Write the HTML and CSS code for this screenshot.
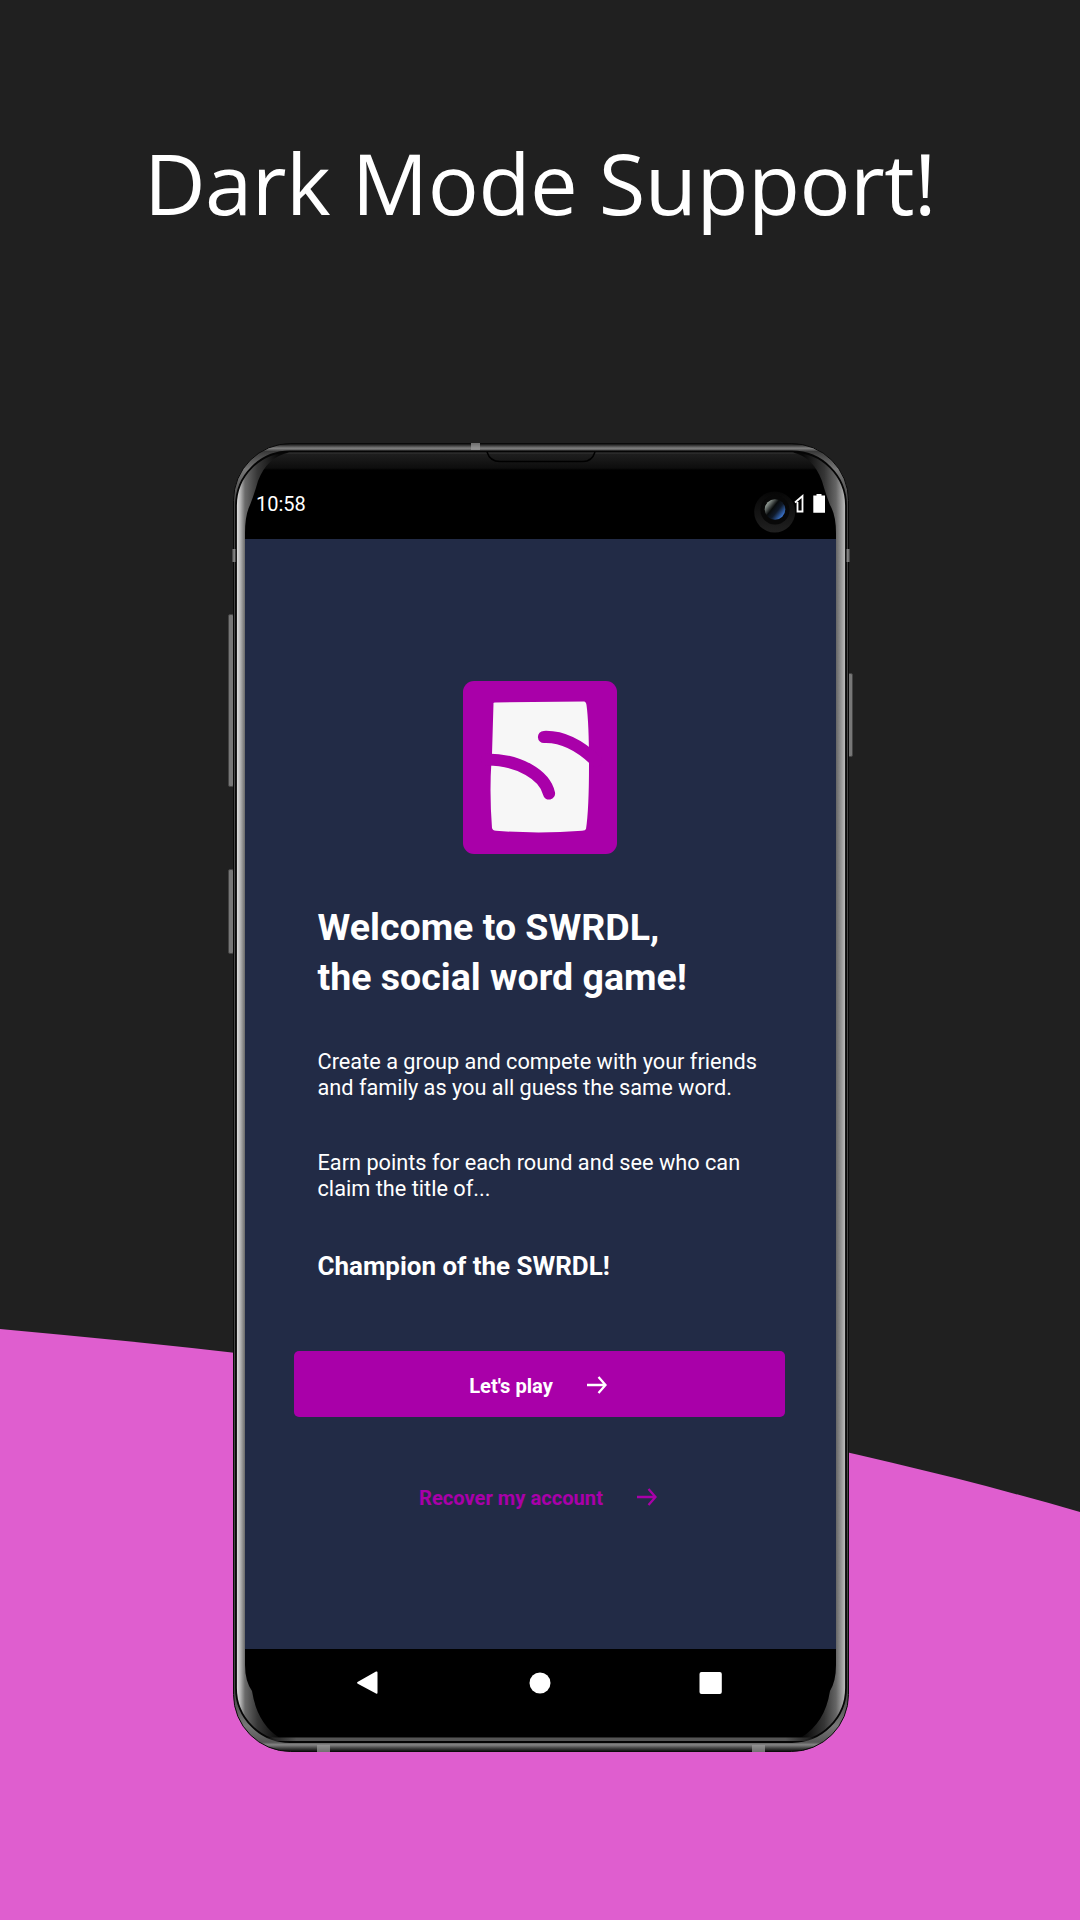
FILE: index.html
```html
<!DOCTYPE html>
<html lang="en">
<head>
<meta charset="utf-8">
<title>SWRDL</title>
<link rel="stylesheet" href="styles.css">
</head>
<body>
<main class="poster">
  <svg class="wave" viewBox="0 0 1080 1920" aria-hidden="true"><path d="M0 1329C360 1361.700 720 1408 1080 1512V1920H0Z"/></svg>
  <h1 class="headline">Dark Mode Support!</h1>
  <section class="phone">
    <i class="key volume"></i><i class="key assist"></i><i class="key power"></i>
    <svg class="shell" viewBox="0 0 616 1309" aria-hidden="true">
      <defs>
        <linearGradient id="rim" gradientUnits="userSpaceOnUse" x1="0" x2="0" y1="0" y2="1309">
          <stop offset="0" stop-color="#000"/><stop offset=".001" stop-color="#1a1a1a"/><stop offset=".004" stop-color="#808080"/><stop offset=".0065" stop-color="#3a3a3a"/><stop offset=".02" stop-color="#777"/><stop offset=".045" stop-color="#444"/><stop offset=".5" stop-color="#4a4a4a"/><stop offset=".955" stop-color="#444"/><stop offset=".98" stop-color="#777"/><stop offset=".9925" stop-color="#555"/><stop offset=".9945" stop-color="#858585"/><stop offset=".997" stop-color="#444"/><stop offset="1" stop-color="#000"/>
        </linearGradient>
        <linearGradient id="side" gradientUnits="userSpaceOnUse" x1="0" x2="616" y1="0" y2="0">
          <stop offset=".0065" stop-color="#ddd"/><stop offset=".012" stop-color="#b4b4b4"/><stop offset=".0195" stop-color="#6a6a6a"/><stop offset=".04" stop-color="#363636"/><stop offset=".075" stop-color="#080808"/>
          <stop offset=".925" stop-color="#080808"/><stop offset=".96" stop-color="#363636"/><stop offset=".979" stop-color="#666"/><stop offset=".988" stop-color="#999"/><stop offset=".9935" stop-color="#bbb"/>
        </linearGradient>
        <linearGradient id="glass" gradientUnits="userSpaceOnUse" x1="0" x2="0" y1="9" y2="27"><stop offset="0" stop-color="#444"/><stop offset=".12" stop-color="#1e1e1e"/><stop offset=".9" stop-color="#0d0d0d"/><stop offset="1" stop-color="#000"/></linearGradient>
        <linearGradient id="lip" gradientUnits="userSpaceOnUse" x1="30" x2="586" y1="0" y2="0"><stop offset="0" stop-color="#555" stop-opacity="0"/><stop offset=".06" stop-color="#555"/><stop offset=".94" stop-color="#555"/><stop offset="1" stop-color="#555" stop-opacity="0"/></linearGradient>
        <linearGradient id="lens" x1="0" y1=".1" x2="1" y2=".9"><stop offset=".1" stop-color="#a0aaa4"/><stop offset=".4" stop-color="#080b0c"/><stop offset=".6" stop-color="#101a2a"/><stop offset=".88" stop-color="#3973cc"/></linearGradient>
        <linearGradient id="ring" x1="0" x2="0" y1="0" y2="1"><stop offset="0" stop-color="#060606"/><stop offset="1" stop-color="#202020"/></linearGradient>
      </defs>
      <rect x=".5" y=".5" width="615" height="1308" rx="57" fill="url(#rim)" stroke="#0a0a0a"/>
      <rect x="3" y="8.500" width="610" height="1290.500" rx="54" fill="url(#side)" stroke="#050505" stroke-width="1.800"/>
      <path d="M12 90Q12 72 17 62Q21 52 25 38Q34 14 56 9.500H560Q580 14 589 38Q593 52 597 62Q603 72 603 90V1222Q603 1238 597 1248Q592 1280 568 1294.500H46Q24 1280 19 1248Q12 1238 12 1222Z" fill="url(#glass)"/>
      <rect x="30" y="1294.500" width="556" height="3.500" fill="url(#lip)"/>
      <path d="M254 9Q257 18.500 267 18.500H350Q359 18.500 362 9" fill="none" stroke="#000" stroke-width="1.500"/>
      <path d="M238 0h9v7h-9zM84 1302h13v7h-13zM519 1302h13v7h-13zM-.5 106h3v13h-3zM613.500 106h3v13h-3z" fill="#999b"/>
    </svg>
    <div class="screen">
      <header class="status">
        <time>10:58</time>
        <svg class="indicators" viewBox="0 0 74 46" aria-hidden="true">
          <circle cx="20.700" cy="24" r="20.500" fill="url(#ring)"/>
          <circle cx="21" cy="22" r="14.500" fill="#080808"/>
          <circle cx="21" cy="21.500" r="10.300" fill="url(#lens)"/>
          <path d="M41 14.500 48.500 8V23.500H43.500V14" fill="none" stroke="#fff" stroke-width="1.800"/>
          <path d="M62.500 6h5v1.500H71V24.700H59.300V7.500H62.500Z" fill="#fff"/>
        </svg>
      </header>
      <article class="app">
        <svg class="logo" viewBox="0 0 154 173" role="img" aria-label="SWRDL">
          <rect width="154" height="173" rx="11" fill="#a900a9"/>
          <path d="M30.500 22.500Q30 21.500 32 21.500L121 20.500Q123 20.500 123.500 24Q126 42 126 84Q126 128 123 148Q122.500 149.500 119 149.800Q75 153 33 149.800Q29.500 149.500 29 147Q26 108 29 73Z" fill="#f7f7f7"/>
          <path d="M81 56Q107 55 133 80M24 78.500C56 78.500 82 94 86 112.500" fill="none" stroke="#a900a9" stroke-width="12.200" stroke-linecap="round"/>
        </svg>
        <h2>Welcome to SWRDL,<br>the social word game!</h2>
        <p>Create a group and compete with your friends<br>and family as you all guess the same word.</p>
        <p>Earn points for each round and see who can<br>claim the title of...</p>
        <h3>Champion of the SWRDL!</h3>
        <button class="action primary">Let's play<svg viewBox="0 0 20 18"><path d="M0 9H18M11.500 1 18.500 9 11.500 17"/></svg></button>
        <button class="action link">Recover my account<svg viewBox="0 0 20 18"><path d="M0 9H18M11.500 1 18.500 9 11.500 17"/></svg></button>
      </article>
      <nav class="nav">
        <svg viewBox="0 0 366 24" aria-hidden="true"><path d="M.5 11 19 .6Q20.500 0 20.500 1.500V21.500Q20.500 23.500 19 22.500L.8 12.800Q-.5 12 .5 11Z"/><circle cx="183" cy="12" r="10.500"/><rect x="342.500" y="1" width="22.300" height="22" rx="2"/></svg>
      </nav>
    </div>
  </section>
</main>
</body>
</html>
```
FILE: styles.css
```css
* { box-sizing: border-box; }
body { margin: 0; background: #202020; color: #fff; font-family: Roboto, "Liberation Sans", sans-serif; }
h1, h2, h3, p { margin: 0; }

.poster { position: relative; width: 1080px; height: 1920px; overflow: hidden; display: flex; flex-direction: column; align-items: center; }
.wave { position: absolute; inset: 0; fill: #df5ecf; }
.headline { position: relative; height: 443px; padding-top: 124px; font: 400 85px/116px "Open Sans", "Noto Sans", sans-serif; letter-spacing: -.5px; white-space: nowrap; }

.phone { position: relative; width: 616px; height: 1309px; margin-left: 2px; }
.shell { position: absolute; top: 0; left: -.5px; width: 616px; height: 1309px; overflow: visible; }
.key { position: absolute; width: 6px; background: #777; border: 1px solid #444; border-radius: 2px; }
.volume { left: -5px; top: 171px; height: 173px; }
.assist { left: -5px; top: 426px; height: 85px; }
.power { right: -4px; top: 230px; height: 84px; }

.screen { position: relative; height: 100%; padding: 11px 13px 0 12px; display: flex; flex-direction: column; }
.status { flex: 0 0 85px; display: flex; justify-content: space-between; padding: 34px 8px 0 11px; }
.status time { font-size: 20px; line-height: 24px; padding-top: 4px; }
.indicators { width: 74px; height: 46px; }

.app { flex: 0 0 1110px; display: flex; flex-direction: column; padding: 142px 51px 0 49px; background: #222b46; }
.logo { align-self: center; width: 154px; height: 173px; }
h2 { margin: 48px 0 0 23.500px; font-size: 37.500px; line-height: 50px; font-weight: 700; white-space: nowrap; }
p { margin: 47px 0 0 23.500px; font-size: 21.720px; line-height: 25.500px; white-space: nowrap; }
p + p { margin-top: 50px; }
h3 { margin: 48px 0 0 23.500px; font-size: 25.950px; line-height: 34px; font-weight: 700; white-space: nowrap; }

.action { display: flex; align-items: center; justify-content: center; gap: 34px; width: 491px; height: 66px; padding: 4px 3px 0 0; border: 0; border-radius: 5px; font: 700 20.150px/24px Roboto, sans-serif; white-space: nowrap; }
.action svg { width: 20px; height: 18px; fill: none; stroke: currentColor; stroke-width: 2.300; margin-top: -3px; }
.primary { margin-top: 68px; background: #a900a9; color: #fff; }
.link { margin-top: 46px; background: none; color: #a900a9; }

.nav { padding: 22px 0 0 112px; }
.nav svg { display: block; width: 366px; height: 24px; fill: #fff; }
```
